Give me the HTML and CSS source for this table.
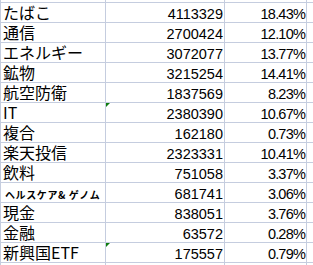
FILE: index.html
```html
<!DOCTYPE html>
<html lang="ja">
<head>
<meta charset="utf-8">
<link rel="stylesheet" href="styles.css">
</head>
<body>
<div class="sheet">
  <div class="c"></div><div class="c"></div><div class="c"></div><div class="c"></div>

  <div class="c name">たばこ</div><div class="c num">4113329</div><div class="c pct">18.43%</div><div class="c"></div>
  <div class="c name">通信</div><div class="c num">2700424</div><div class="c pct">12.10%</div><div class="c"></div>
  <div class="c name">エネルギー</div><div class="c num">3072077</div><div class="c pct">13.77%</div><div class="c"></div>
  <div class="c name">鉱物</div><div class="c num">3215254</div><div class="c pct">14.41%</div><div class="c"></div>
  <div class="c name">航空防衛</div><div class="c num">1837569</div><div class="c pct">8.23%</div><div class="c"></div>
  <div class="c name">IT</div><div class="c num flag">2380390</div><div class="c pct">10.67%</div><div class="c"></div>
  <div class="c name">複合</div><div class="c num">162180</div><div class="c pct">0.73%</div><div class="c"></div>
  <div class="c name">楽天投信</div><div class="c num">2323331</div><div class="c pct">10.41%</div><div class="c"></div>
  <div class="c name">飲料</div><div class="c num">751058</div><div class="c pct">3.37%</div><div class="c"></div>
  <div class="c name small">ヘルスケア&amp; ゲノム</div><div class="c num">681741</div><div class="c pct">3.06%</div><div class="c"></div>
  <div class="c name">現金</div><div class="c num">838051</div><div class="c pct">3.76%</div><div class="c"></div>
  <div class="c name">金融</div><div class="c num">63572</div><div class="c pct">0.28%</div><div class="c"></div>
  <div class="c name">新興国ETF</div><div class="c num flag">175557</div><div class="c pct">0.79%</div><div class="c"></div>

  <div class="c"></div><div class="c"></div><div class="c"></div><div class="c"></div>
</div>
</body>
</html>
```

FILE: styles.css
```css
html, body {
  margin: 0;
  padding: 0;
  background: #ffffff;
}

.sheet {
  display: grid;
  grid-template-columns: 104px 118px 81px 1fr;
  grid-template-rows: 2px repeat(13, 19px) 1fr;
  gap: 1px;
  padding-left: 1px;
  height: 265px;
  width: 313px;
  box-sizing: border-box;
  background: #c5cddf;
  overflow: hidden;
}

.c {
  background: #ffffff;
  color: #000000;
  overflow: hidden;
  white-space: nowrap;
  position: relative;
}

.name {
  font-family: "Noto Sans CJK JP", "Liberation Sans", sans-serif;
  font-size: 16px;
  line-height: 19px;
  padding-left: 2px;
}

.name.small {
  font-size: 10px;
  font-weight: bold;
  letter-spacing: 0.6px;
  line-height: 12px;
  padding-left: 4px;
  padding-top: 6px;
}

.num, .pct {
  font-family: "Liberation Sans", "DejaVu Sans", sans-serif;
  font-size: 14.5px;
  line-height: 16px;
  padding-top: 3px;
  text-align: right;
}

.num {
  padding-right: 1px;
}

.pct {
  padding-right: 1px;
  letter-spacing: -0.8px;
}

.flag::before {
  content: "";
  position: absolute;
  left: -1px;
  top: 0;
  width: 0;
  height: 0;
  border-top: 5px solid #0f7d0f;
  border-right: 5px solid transparent;
}
```
